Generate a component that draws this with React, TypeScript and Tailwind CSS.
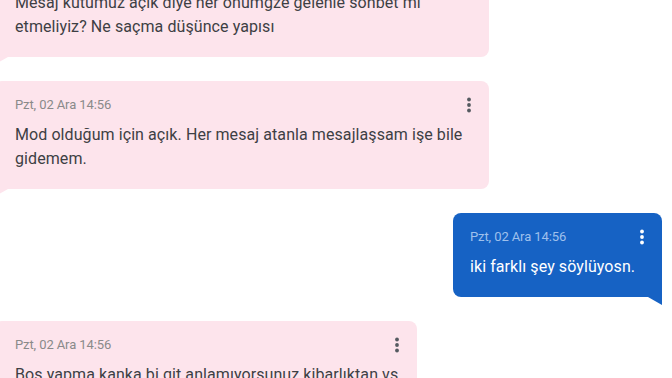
const Kebab = ({ light }: { light?: boolean }) => (
  <svg width="4" height="16" viewBox="0 0 4 16" className={light ? "fill-white" : "fill-[#555a60]"}>
    <circle cx="2" cy="2.5" r="1.9" />
    <circle cx="2" cy="8" r="1.9" />
    <circle cx="2" cy="13.5" r="1.9" />
  </svg>
);

type Msg = {
  text: string;
  width: string;
  mine?: boolean;
};

const messages: Msg[] = [
  {
    text: "Mesaj kutumuz açık diye her önümgze gelenle sohbet mi etmeliyiz? Ne saçma düşünce yapısı",
    width: "w-[495px]",
  },
  {
    text: "Mod olduğum için açık. Her mesaj atanla mesajlaşsam işe bile gidemem.",
    width: "w-[495px]",
  },
  { text: "iki farklı şey söylüyosn.", width: "w-[209px]", mine: true },
  {
    text: "Boş yapma kanka bi git anlamıyorsunuz kibarlıktan vs",
    width: "w-[423px]",
  },
];

const Bubble = ({ m }: { m: Msg }) => {
  const box = m.mine
    ? "self-end mr-[10px] bg-[#1662c4] rounded-t-[8px] rounded-bl-[8px] pl-[17px] pr-[18px]"
    : "self-start ml-[-6px] bg-[#fde4ec] rounded-t-[8px] rounded-br-[8px] pl-[21px] pr-[18px]";
  return (
    <div className={`relative ${m.width} ${box} pt-[14px] pb-[18px]`}>
      <div className="flex items-center justify-between h-[20px]">
        <span className={`text-[13px] tracking-[-0.1px] ${m.mine ? "text-[#9fc0ec]" : "text-[#8a8a8a]"}`}>
          Pzt, 02 Ara 14:56
        </span>
        <Kebab light={m.mine} />
      </div>
      <p
        className={`mt-[8px] text-[16px] leading-[24px] tracking-[0.08px] ${
          m.mine ? "text-white" : "text-[#3d3f44]"
        }`}
      >
        {m.text}
      </p>
      {m.mine ? (
        <svg width="14" height="8" className="absolute right-0 top-full fill-[#1662c4]">
          <polygon points="0,0 14,0 14,8" />
        </svg>
      ) : (
        <svg width="14" height="8" className="absolute left-0 top-full fill-[#fde4ec]">
          <polygon points="0,0 14,0 0,8" />
        </svg>
      )}
    </div>
  );
};

export default function App() {
  return (
    <div className="w-[672px] h-[378px] overflow-hidden bg-white font-['Roboto',sans-serif]">
      <div className="flex flex-col gap-6 mt-[-51px]">
        {messages.map((m, i) => (
          <Bubble key={i} m={m} />
        ))}
      </div>
    </div>
  );
}
